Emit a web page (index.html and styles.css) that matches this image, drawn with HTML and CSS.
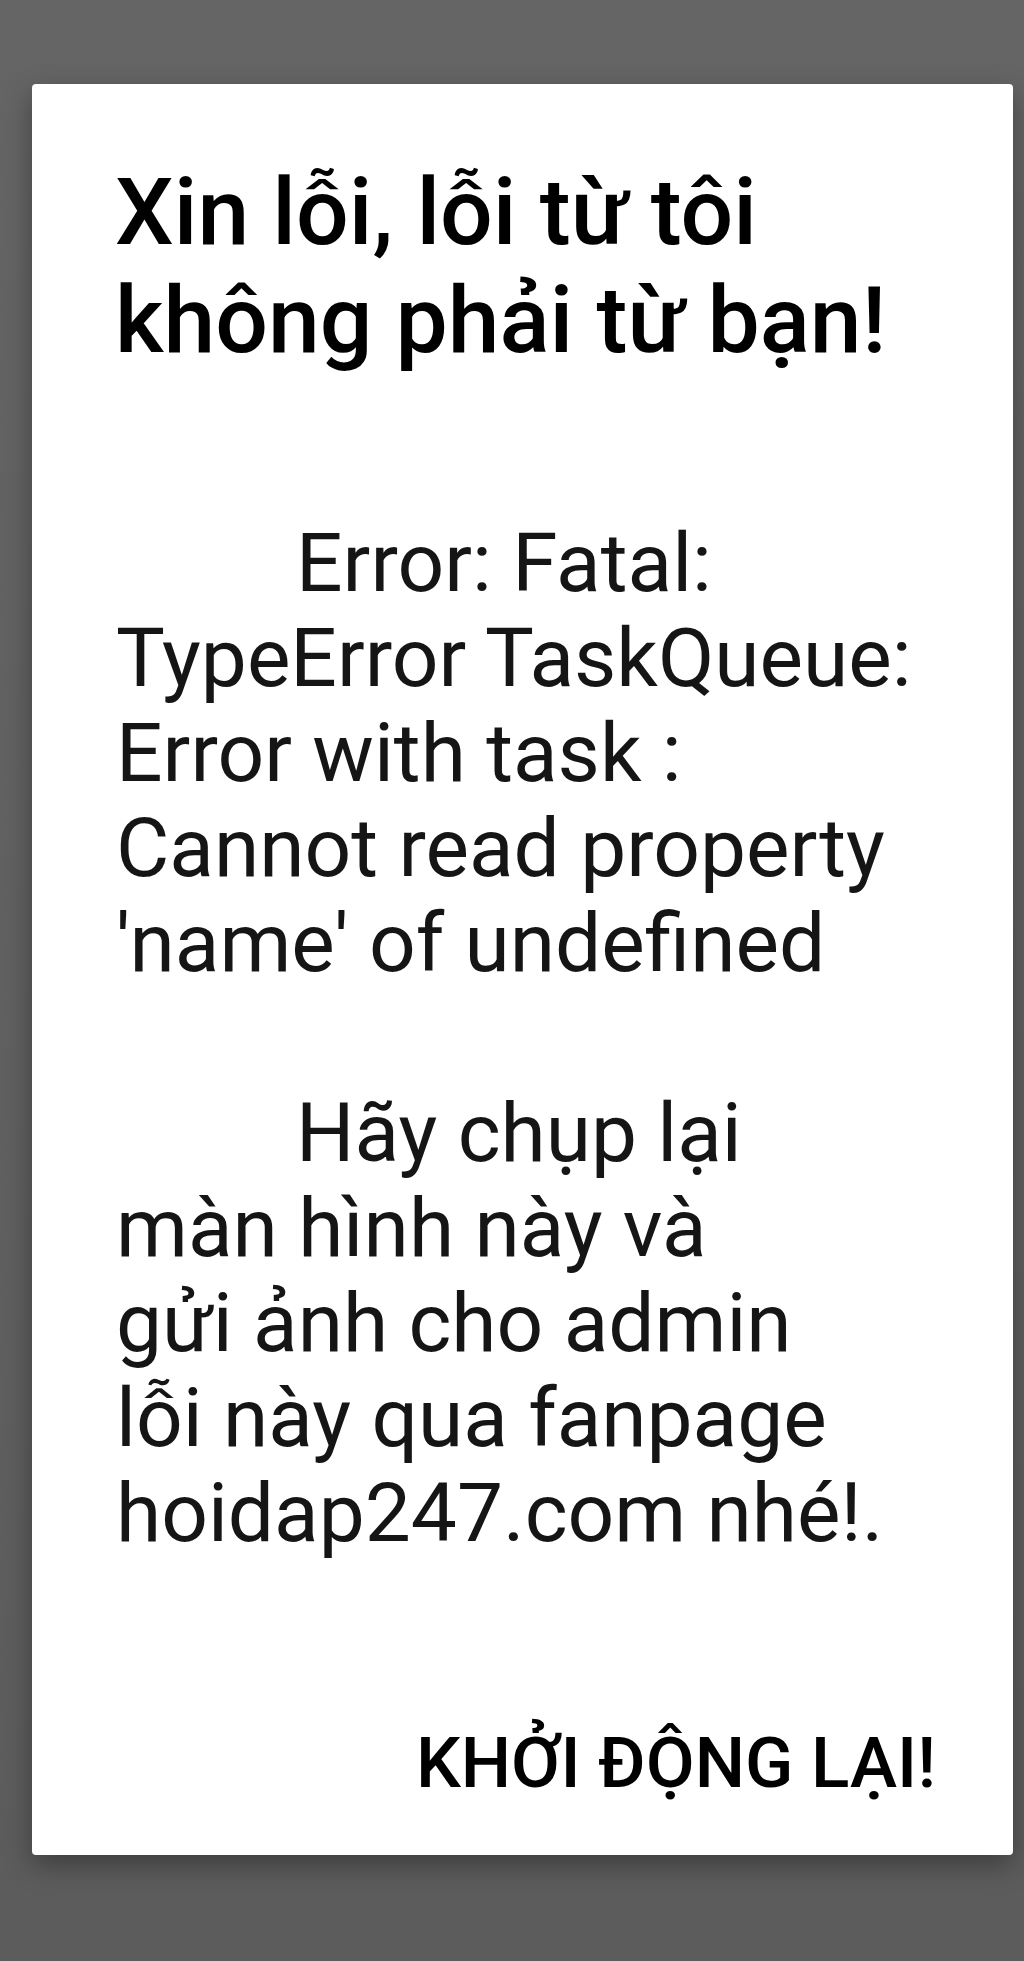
FILE: index.html
```html
<!DOCTYPE html>
<html lang="vi">
<head>
<meta charset="utf-8">
<title>Lỗi</title>
<link rel="stylesheet" href="styles.css">
</head>
<body>
<div class="dialog">
  <h1 class="dialog-title">Xin lỗi, lỗi từ tôi<br>không phải từ bạn!</h1>
  <div class="dialog-message">
    <p class="msg-para">Error: Fatal:<br>TypeError TaskQueue:<br>Error with task :<br>Cannot read property<br>'name' of undefined</p>
    <p class="msg-para">Hãy chụp lại<br>màn hình này và<br>gửi ảnh cho admin<br>lỗi này qua fanpage<br>hoidap247.com nhé!.</p>
  </div>
  <div class="dialog-actions">
    <span class="action-btn">KHỞI ĐỘNG LẠI!</span>
  </div>
</div>
</body>
</html>
```
FILE: styles.css
```css
html, body {
  margin: 0;
  padding: 0;
}
body {
  width: 1024px;
  height: 1961px;
  box-sizing: border-box;
  padding: 84px 11px 0 32px;
  background: linear-gradient(#656565, #5c5c5c);
  font-family: Roboto, "Noto Sans", "Liberation Sans", sans-serif;
}
.dialog {
  width: 981px;
  height: 1771px;
  box-sizing: border-box;
  background: #fff;
  border-radius: 4px;
  box-shadow: 0 10px 28px rgba(0, 0, 0, 0.35);
  padding: 75px 77px 0 84px;
  display: flex;
  flex-direction: column;
}
.dialog-title {
  margin: 0;
  font-size: 93px;
  line-height: 108px;
  font-weight: 500;
  color: #000;
  margin-left: -1px;
}
.dialog-message {
  margin-top: 141px;
  font-size: 82px;
  line-height: 95px;
  color: #151515;
  display: flex;
  flex-direction: column;
  gap: 95px;
}
.msg-para {
  margin: 0;
  text-indent: 180px;
}
.dialog-actions {
  margin-top: auto;
  padding-bottom: 51px;
  display: flex;
  justify-content: flex-end;
}
.action-btn {
  font-size: 71px;
  line-height: 82px;
  font-weight: 500;
  color: #000;
}
```
